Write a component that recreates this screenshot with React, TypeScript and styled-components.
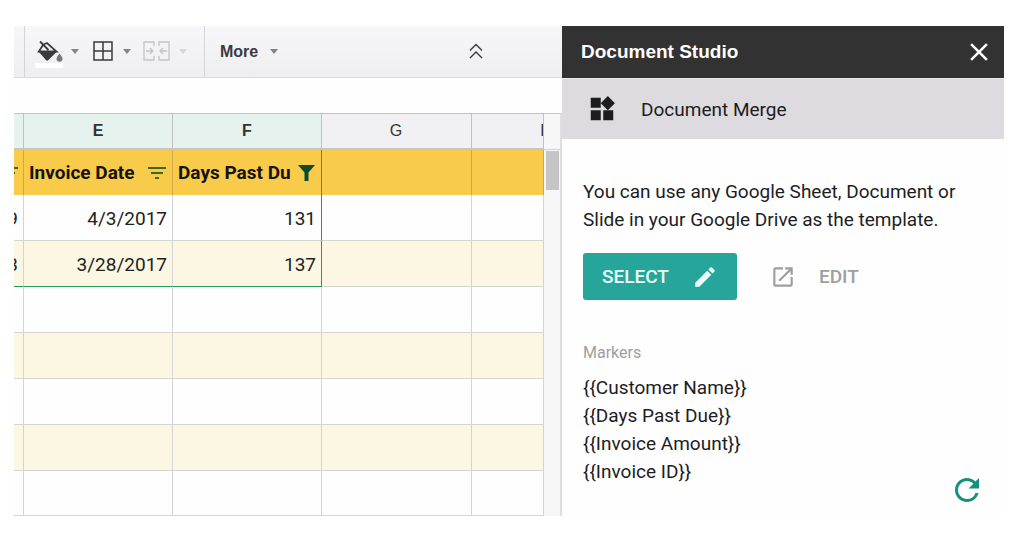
import React from "react";
import styled, { createGlobalStyle, css } from "styled-components";
import { MdClose, MdFilterList, MdLaunch, MdModeEdit, MdRefresh, MdWidgets } from "react-icons/md";

const GlobalStyle = createGlobalStyle`
  *, *::before, *::after { box-sizing: border-box; }
  body {
    margin: 0;
    background: #fff;
    color: #1d1d1f;
    font-family: Roboto, "Liberation Sans", sans-serif;
  }
  button { font: inherit; color: inherit; }
`;

const arial = `"Liberation Sans", Arial, sans-serif`;

const Frame = styled.main`
  display: grid;
  grid-template-columns: minmax(0, 1fr) 442px;
  padding: 26px 7px 36px 14px;
  min-height: 100vh;
`;

const SheetPane = styled.section`
  display: flex;
  flex-direction: column;
  min-width: 0;
  overflow: hidden;
`;

const Toolbar = styled.div`
  display: flex;
  height: 52px;
  background: linear-gradient(#f7f6f8, #eeedf0);
  border-bottom: 1px solid #d9d8dc;
`;

const ToolGroup = styled.div<{ $start: number; $end: number; $divided?: boolean }>`
  display: flex;
  align-items: center;
  gap: 12px;
  padding: 0 ${(p) => p.$end}px 0 ${(p) => p.$start}px;
  ${(p) => p.$divided && css`border-right: 1px solid #d4d3d8;`}
`;

const ToolButton = styled.button<{ $gap?: number }>`
  display: flex;
  align-items: center;
  gap: ${(p) => p.$gap ?? 8}px;
  padding: 0;
  border: 0;
  background: none;
  color: #3a3a3c;
  font-family: ${arial};
  font-size: 16px;
  font-weight: 700;
  svg { display: block; flex: none; }
  &:disabled { color: #c4c3c7; }
`;

const CollapseButton = styled(ToolButton)`
  margin: 0 79px 0 auto;
`;

const FormulaStrip = styled.div`
  height: 35px;
  background: #fefefe;
`;

const GridArea = styled.div`
  display: flex;
  flex: 1;
`;

const Sheet = styled.table`
  flex: 1;
  min-width: 0;
  width: 100%;
  table-layout: fixed;
  border-collapse: separate;
  border-spacing: 0;
  align-self: flex-start;
`;

const Column = styled.col<{ $width?: number }>`
  ${(p) => p.$width && css`width: ${p.$width}px;`}
`;

const ColumnHead = styled.th<{ $selected?: boolean }>`
  height: 37px;
  padding: 0;
  overflow: hidden;
  border-top: 1px solid #c4c4c7;
  border-right: 1px solid #c0c0c4;
  border-bottom: 2px solid #c6c6c9;
  background: ${(p) => (p.$selected ? "#e6f2ee" : "#f1f1f4")};
  color: ${(p) => (p.$selected ? "#303433" : "#333")};
  font-family: ${arial};
  font-size: 16px;
  font-weight: ${(p) => (p.$selected ? 700 : 400)};
  line-height: 34px;
`;

const ColumnLetter = styled.span`
  display: block;
  width: 148px;
  text-align: center;
`;

const FieldCell = styled.th<{ $edge?: boolean }>`
  height: 45px;
  padding: 0 5px;
  overflow: hidden;
  background: #f8cb4a;
  border-right: 1px solid ${(p) => (p.$edge ? "#4f9430" : "#cfa844")};
  color: #15130c;
  font-size: 19px;
  font-weight: 700;
  white-space: nowrap;
`;

const Field = styled.div`
  display: flex;
  align-items: center;
  justify-content: space-between;
`;

const FilterButton = styled.button<{ $active?: boolean }>`
  display: flex;
  align-items: center;
  justify-content: center;
  flex: none;
  width: 20px;
  height: 24px;
  padding: 0;
  border: 0;
  background: none;
  color: ${(p) => (p.$active ? "#0b4a2b" : "#45651f")};
  svg { flex: none; }
`;

const SliverField = styled(Field)`
  justify-content: flex-end;
  width: 100%;
`;

const Cell = styled.td<{ $edge?: boolean; $bottom?: boolean }>`
  height: 46px;
  padding: 1px 5px 0 0;
  overflow: hidden;
  border-right: 1px solid ${(p) => (p.$edge ? "#1f9d5a" : "#d4d4d4")};
  border-bottom: 1px solid ${(p) => (p.$bottom ? "#1f9d5a" : "#d4d4d0")};
  color: #222;
  font-size: 19px;
`;

const CellValue = styled.div`
  display: flex;
  justify-content: flex-end;
`;

const Row = styled.tr<{ $band?: boolean }>`
  background: ${(p) => (p.$band ? "#fcf7e3" : "#fefefe")};
  &:last-child ${Cell} { height: 45px; }
`;

const Scrollbar = styled.div`
  display: flex;
  flex-direction: column;
  width: 18px;
  border-top: 1px solid #c9c9cc;
  border-right: 2px solid #dedde0;
  background: #f7f7f8;
`;

const ScrollCorner = styled.div`
  height: 36px;
  border-bottom: 1px solid #d0d0d3;
`;

const ScrollThumb = styled.div`
  width: 13px;
  height: 39px;
  margin: 1px 0 0 2px;
  background: #c5c4c7;
`;

const Sidebar = styled.aside`
  display: flex;
  flex-direction: column;
  min-width: 0;
  background: #fefefe;
`;

const SidebarHeader = styled.header`
  display: flex;
  align-items: center;
  justify-content: space-between;
  height: 52px;
  padding: 0 10px 0 19px;
  background: #323232;
  color: #fff;
`;

const Title = styled.h1`
  margin: 0;
  font-family: ${arial};
  font-size: 19px;
  font-weight: 700;
`;

const IconButton = styled.button`
  display: flex;
  flex: none;
  padding: 0;
  border: 0;
  background: none;
`;

const AddonBar = styled.div`
  display: flex;
  align-items: center;
  gap: 24px;
  height: 61px;
  padding-left: 25px;
  background: #dddbdf;
  border-top: 1px solid #e8e7ea;
`;

const AddonName = styled.h2`
  margin: 0;
  font-size: 19px;
  font-weight: 400;
`;

const SidebarBody = styled.div`
  display: flex;
  flex: 1;
  flex-direction: column;
  padding: 39px 19px 8px 21px;
`;

const Intro = styled.p`
  margin: 0;
  font-size: 19px;
  line-height: 28px;
`;

const Actions = styled.div`
  display: flex;
  gap: 33px;
  margin-top: 19px;
`;

const ActionButton = styled.button<{ $primary?: boolean }>`
  display: flex;
  align-items: center;
  gap: 23px;
  height: 47px;
  padding: 0 19px;
  border: 0;
  border-radius: 3px;
  background: #26a69a;
  color: #e9fffb;
  font-size: 19px;
  font-weight: 500;
  ${(p) =>
    !p.$primary &&
    css`
      padding: 0;
      background: none;
      color: #9e9e9e;
    `}
`;

const MarkersLabel = styled.h3`
  margin: 41px 0 9px;
  color: #9e9e9e;
  font-size: 16px;
  font-weight: 400;
  line-height: 24px;
`;

const MarkersRow = styled.div`
  display: flex;
  flex: 1;
  justify-content: space-between;
`;

const MarkerList = styled.ul`
  margin: 0;
  padding: 0;
  list-style: none;
  font-size: 19px;
  line-height: 28px;
`;

const RefreshButton = styled(IconButton)`
  align-self: flex-end;
  color: #14907f;
`;

const Caret = () => (
  <svg width="8" height="5" viewBox="0 0 8 5" aria-hidden="true">
    <path d="M0 0h8L4 5z" fill="currentColor" opacity="0.6" />
  </svg>
);

const FillIcon = () => (
  <svg width="28" height="32" viewBox="0 0 28 32" aria-hidden="true">
    <path d="M0 27h28v5H0z" fill="#fff" />
    <path
      d="M5 5.500l8.500 8.500M8.200 8.700l3.800-1.700 9.500 8.500H3.800z"
      fill="none"
      stroke="currentColor"
      strokeWidth="1.800"
    />
    <path d="M3 15h19.500l-9.300 9.300q-1 .8-2 0z" fill="currentColor" />
    <path d="M24.500 17.500s3 3.500 3 5.200a3 3 0 0 1-6 0c0-1.700 3-5.200 3-5.200z" fill="#77777b" />
  </svg>
);

const BordersIcon = () => (
  <svg width="24" height="24" viewBox="0 0 24 24" aria-hidden="true">
    <path d="M3 2h18v18H3zM12 2v18M3 11h18" fill="none" stroke="currentColor" strokeWidth="1.500" />
  </svg>
);

const MergeIcon = () => (
  <svg width="28" height="24" viewBox="0 0 28 24" aria-hidden="true">
    <path
      d="M11 6V2H1v18h10v-4M16 6V2h10v18H16v-4M3 11h7M7 8l3 3-3 3M24 11h-7M20 8l-3 3 3 3"
      fill="none"
      stroke="currentColor"
      strokeWidth="1.300"
    />
  </svg>
);

const CollapseIcon = () => (
  <svg width="14" height="18" viewBox="0 0 14 18" aria-hidden="true">
    <path d="M1 7.500l6-6 6 6M1 15l6-6 6 6" fill="none" stroke="currentColor" strokeWidth="1.400" />
  </svg>
);

const FunnelIcon = () => (
  <svg width="17" height="16" viewBox="0 0 17 16" aria-hidden="true">
    <path d="M0 0h17l-6.500 7.500V16h-4V7.500z" fill="currentColor" />
  </svg>
);

const rows = [
  { amount: "9", date: "4/3/2017", days: "131" },
  { amount: "3", date: "3/28/2017", days: "137" },
  {},
  {},
  {},
  {},
  {},
] as { amount?: string; date?: string; days?: string }[];

const markers = ["Customer Name", "Days Past Due", "Invoice Amount", "Invoice ID"];

export default function App() {
  return (
    <>
      <GlobalStyle />
      <Frame>
        <SheetPane>
          <Toolbar>
            <ToolGroup $start={10} $end={0} $divided />
            <ToolGroup $start={10} $end={17} $divided>
              <ToolButton aria-label="Fill color"><FillIcon /><Caret /></ToolButton>
              <ToolButton aria-label="Borders"><BordersIcon /><Caret /></ToolButton>
              <ToolButton aria-label="Merge cells" disabled><MergeIcon /><Caret /></ToolButton>
            </ToolGroup>
            <ToolGroup $start={15} $end={0}>
              <ToolButton $gap={12}>More<Caret /></ToolButton>
            </ToolGroup>
            <CollapseButton aria-label="Hide the menus"><CollapseIcon /></CollapseButton>
          </Toolbar>
          <FormulaStrip />
          <GridArea>
            <Sheet>
              <colgroup>
                <Column $width={10} />
                <Column $width={149} />
                <Column $width={149} />
                <Column $width={150} />
                <Column />
              </colgroup>
              <thead>
                <tr>
                  <ColumnHead $selected />
                  <ColumnHead $selected><ColumnLetter>E</ColumnLetter></ColumnHead>
                  <ColumnHead $selected><ColumnLetter>F</ColumnLetter></ColumnHead>
                  <ColumnHead><ColumnLetter>G</ColumnLetter></ColumnHead>
                  <ColumnHead><ColumnLetter>H</ColumnLetter></ColumnHead>
                </tr>
                <tr>
                  <FieldCell>
                    <SliverField>
                      <FilterButton aria-label="Filter"><MdFilterList size={24} /></FilterButton>
                    </SliverField>
                  </FieldCell>
                  <FieldCell>
                    <Field>
                      Invoice Date
                      <FilterButton aria-label="Filter Invoice Date"><MdFilterList size={24} /></FilterButton>
                    </Field>
                  </FieldCell>
                  <FieldCell $edge>
                    <Field>
                      Days Past Du
                      <FilterButton $active aria-label="Filter Days Past Due"><FunnelIcon /></FilterButton>
                    </Field>
                  </FieldCell>
                  <FieldCell />
                  <FieldCell />
                </tr>
              </thead>
              <tbody>
                {rows.map((row, i) => (
                  <Row key={i} $band={i % 2 === 1}>
                    <Cell $bottom={i === 1}><CellValue>{row.amount}</CellValue></Cell>
                    <Cell $bottom={i === 1}><CellValue>{row.date}</CellValue></Cell>
                    <Cell $bottom={i === 1} $edge={i < 2}><CellValue>{row.days}</CellValue></Cell>
                    <Cell />
                    <Cell />
                  </Row>
                ))}
              </tbody>
            </Sheet>
            <Scrollbar>
              <ScrollCorner />
              <ScrollThumb />
            </Scrollbar>
          </GridArea>
        </SheetPane>
        <Sidebar>
          <SidebarHeader>
            <Title>Document Studio</Title>
            <IconButton aria-label="Close"><MdClose size={30} /></IconButton>
          </SidebarHeader>
          <AddonBar>
            <MdWidgets size={30} />
            <AddonName>Document Merge</AddonName>
          </AddonBar>
          <SidebarBody>
            <Intro>You can use any Google Sheet, Document or Slide in your Google Drive as the template.</Intro>
            <Actions>
              <ActionButton $primary>SELECT<MdModeEdit size={26} /></ActionButton>
              <ActionButton><MdLaunch size={26} />EDIT</ActionButton>
            </Actions>
            <MarkersLabel>Markers</MarkersLabel>
            <MarkersRow>
              <MarkerList>
                {markers.map((name) => (
                  <li key={name}>{`{{${name}}}`}</li>
                ))}
              </MarkerList>
              <RefreshButton aria-label="Refresh markers"><MdRefresh size={36} /></RefreshButton>
            </MarkersRow>
          </SidebarBody>
        </Sidebar>
      </Frame>
    </>
  );
}
